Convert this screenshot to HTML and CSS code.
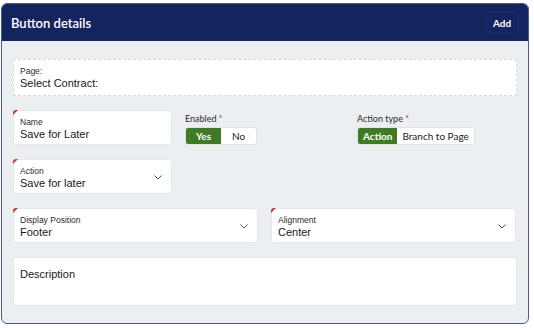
FILE: index.html
```html
<!DOCTYPE html>
<html lang="en">
<head>
    <meta charset="UTF-8">
    <title>Button details</title>
    <link rel="stylesheet" href="styles.css">
</head>
<body>
    <div class="panel">
        <div class="panel-header">
            <h1>Button details</h1>
            <button class="add-btn">Add</button>
        </div>

        <div class="panel-body">
            <div class="field field-dotted">
                <span class="field-label">Page:</span>
                <span class="field-value">Select Contract:</span>
            </div>

            <div class="row row-3">
                <div class="field required">
                    <span class="field-label">Name</span>
                    <span class="field-value">Save for Later</span>
                </div>
                <div class="toggle-group">
                    <span class="toggle-label">Enabled <span class="star">*</span></span>
                    <div class="toggle">
                        <span class="toggle-opt active opt-yes">Yes</span>
                        <span class="toggle-opt opt-no">No</span>
                    </div>
                </div>
                <div class="toggle-group">
                    <span class="toggle-label">Action type <span class="star">*</span></span>
                    <div class="toggle">
                        <span class="toggle-opt active">Action</span>
                        <span class="toggle-opt">Branch to Page</span>
                    </div>
                </div>
            </div>

            <div class="row row-3">
                <div class="field required select">
                    <span class="field-label">Action</span>
                    <span class="field-value">Save for later</span>
                    <svg class="chevron" width="8" height="5" viewBox="0 0 8 5"><polyline points="0.5,0.5 4,4 7.5,0.5" fill="none" stroke="#555" stroke-width="1"/></svg>
                </div>
            </div>

            <div class="row row-2">
                <div class="field required select">
                    <span class="field-label">Display Position</span>
                    <span class="field-value">Footer</span>
                    <svg class="chevron" width="8" height="5" viewBox="0 0 8 5"><polyline points="0.5,0.5 4,4 7.5,0.5" fill="none" stroke="#555" stroke-width="1"/></svg>
                </div>
                <div class="field required select">
                    <span class="field-label">Alignment</span>
                    <span class="field-value">Center</span>
                    <svg class="chevron" width="8" height="5" viewBox="0 0 8 5"><polyline points="0.5,0.5 4,4 7.5,0.5" fill="none" stroke="#555" stroke-width="1"/></svg>
                </div>
            </div>

            <div class="field field-desc">
                <span class="field-value">Description</span>
            </div>
        </div>
    </div>
</body>
</html>
```

FILE: styles.css
```css
body {
    margin: 0;
    background-color: #ffffff;
    font-family: 'Liberation Sans', Arial, sans-serif;
    color: #1c1c1c;
}
.panel {
    margin: 3px 0 0 1px;
    width: 526px;
    border: 1px solid #4a5a98;
    border-radius: 6px;
    overflow: hidden;
    background-color: #eceff2;
}
.panel-header {
    display: flex;
    align-items: center;
    justify-content: space-between;
    height: 37px;
    padding: 0 9px 0 9px;
    background-color: #13245e;
}
.panel-header h1 {
    margin: 0;
    font-family: 'Lato', sans-serif;
    font-size: 13px;
    font-weight: 600;
    color: #ffffff;
}
.add-btn {
    height: 22px;
    width: 34px;
    padding: 0;
    border: 1px solid #1b2c69;
    border-radius: 3px;
    background-color: #13245e;
    color: #ffffff;
    font-family: 'Lato', sans-serif;
    font-weight: 700;
    font-size: 10px;
}
.panel-body {
    display: flex;
    flex-direction: column;
    gap: 14px;
    padding: 18px 11px 17px 11px;
}
.row {
    display: grid;
    align-items: start;
    gap: 13px;
}
.row-3 {
    grid-template-columns: 159px 159px 159px;
}
.row-2 {
    grid-template-columns: 245px 245px;
}
.field {
    position: relative;
    display: flex;
    flex-direction: column;
    padding: 6px 6px 3px 6px;
    background-color: #ffffff;
    border: 1px solid #e4e7eb;
    border-radius: 4px;
}
.field-dotted {
    border: 1px dashed #d5d9df;
    border-radius: 0;
    padding: 6px 6px 5px 6px;
}
.field-label {
    font-size: 8.5px;
    line-height: 10px;
    color: #2b2b2b;
}
.field-value {
    font-size: 11px;
    line-height: 14px;
    color: #181818;
}
.required::before {
    content: "";
    position: absolute;
    top: -1px;
    left: -1px;
    border-top: 5px solid #d8361f;
    border-right: 5px solid transparent;
    border-top-left-radius: 3px;
}
.chevron {
    position: absolute;
    right: 9px;
    top: 15px;
}
.field-desc {
    height: 38px;
    padding: 9px 6px 0 6px;
}
.toggle-group {
    display: flex;
    flex-direction: column;
    align-items: flex-start;
    gap: 3px;
    padding-top: 4px;
}
.toggle-label {
    font-family: 'Lato', sans-serif;
    font-size: 9px;
    line-height: 10px;
    color: #2b2b2b;
}
.star {
    color: #e3231a;
    font-size: 9px;
}
.toggle {
    display: flex;
    height: 16px;
    border: 1px solid #dfe2e6;
    border-radius: 3px;
    background-color: #ffffff;
    overflow: hidden;
}
.toggle-opt {
    display: flex;
    align-items: center;
    justify-content: center;
    padding: 0 5px;
    font-family: 'Lato', sans-serif;
    font-size: 10px;
    color: #1c1c1c;
}
.toggle-opt.active {
    background-color: #3f7b24;
    color: #ffffff;
    font-weight: 700;
}
.opt-yes, .opt-no {
    width: 25px;
}
```
